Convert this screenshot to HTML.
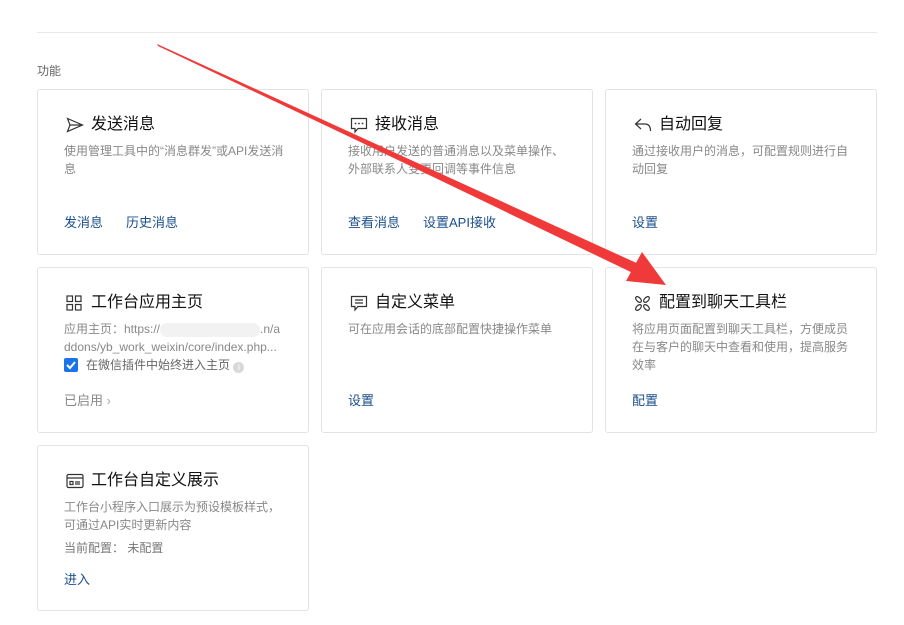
<!DOCTYPE html>
<html><head><meta charset="utf-8"><style>
*{margin:0;padding:0;box-sizing:border-box}
body{width:904px;height:625px;background:#fff;font-family:"Liberation Sans","Noto Sans CJK SC",sans-serif;position:relative;overflow:hidden}
.hr{position:absolute;left:37px;top:32px;width:840px;height:1px;background:#e8e8e8}
.lbl{position:absolute;left:37px;top:62px;font-size:12px;color:#666}
.card{position:absolute;width:272px;height:166px;border:1px solid #e3e3e3;border-radius:3px}
.t{position:absolute;left:26px;top:25px;font-size:16px;color:#111;line-height:20px;white-space:nowrap}
.ic{position:absolute;left:28px;top:27px}
.d{position:absolute;left:26px;font-size:12px;color:#888;line-height:18px;width:225px}
.a{position:absolute;left:26px;font-size:13px;color:#1b4f8a;line-height:18px;white-space:nowrap}
.a span{margin-right:23px}
</style></head><body>
<div class="hr"></div>
<div class="lbl">功能</div>

<div class="card" style="left:37px;top:89px">
<svg class="ic" width="18" height="16" viewBox="0 0 18 16"><path d="M1.5 1.5 L16.5 8 L1.5 14.5 L4 8 Z M4 8 H16.5" fill="none" stroke="#333" stroke-width="1.2"/></svg>
<div class="t" style="left:53px">发送消息</div>
<div class="d" style="top:52px">使用管理工具中的“消息群发”或API发送消息</div>
<div class="a" style="top:124px"><span>发消息</span>历史消息</div>
</div>

<div class="card" style="left:321px;top:89px">
<svg class="ic" width="18" height="17" viewBox="0 0 18 17"><path d="M1.5 1.5 H16.5 V11.5 H8 L5 15 V11.5 H1.5 Z" fill="none" stroke="#333" stroke-width="1.2"/><circle cx="5.5" cy="6.5" r=".9" fill="#333"/><circle cx="9" cy="6.5" r=".9" fill="#333"/><circle cx="12.5" cy="6.5" r=".9" fill="#333"/></svg>
<div class="t" style="left:53px">接收消息</div>
<div class="d" style="top:52px">接收用户发送的普通消息以及菜单操作、外部联系人变更回调等事件信息</div>
<div class="a" style="top:124px"><span>查看消息</span>设置API接收</div>
</div>

<div class="card" style="left:605px;top:89px">
<svg class="ic" width="18" height="16" viewBox="0 0 18 16"><path d="M7 2 L1.5 7 L7 12 M1.5 7 H11 Q16.5 7 16.5 14" fill="none" stroke="#333" stroke-width="1.2"/></svg>
<div class="t" style="left:53px">自动回复</div>
<div class="d" style="top:52px">通过接收用户的消息，可配置规则进行自动回复</div>
<div class="a" style="top:124px">设置</div>
</div>

<div class="card" style="left:37px;top:267px">
<svg class="ic" width="16" height="16" viewBox="0 0 16 16" fill="none" stroke="#333" stroke-width="1.2"><rect x="1" y="1" width="5.5" height="5.5"/><rect x="9.5" y="1" width="5.5" height="5.5"/><rect x="1" y="9.5" width="5.5" height="5.5"/><rect x="9.5" y="9.5" width="5.5" height="5.5"/></svg>
<div class="t" style="left:53px">工作台应用主页</div>
<div class="d" style="top:52px;width:230px;white-space:nowrap">应用主页：https://<span style="display:inline-block;width:100px;height:14px;background:#f2f2f2;vertical-align:middle;border-radius:7px"></span>.n/a<br>ddons/yb_work_weixin/core/index.php...</div>
<div style="position:absolute;left:26px;top:90px;width:14px;height:14px;background:#1a73e8;border-radius:2px"><svg width="14" height="14"><path d="M3 7 L6 10 L11 4" stroke="#fff" stroke-width="2" fill="none"/></svg></div>
<div class="d" style="left:48px;top:88px;color:#666">在微信插件中始终进入主页 <span style="display:inline-block;width:11px;height:11px;border-radius:50%;background:#d8d8d8;color:#fff;font-size:9px;line-height:11px;text-align:center;vertical-align:-1px">i</span></div>
<div class="a" style="top:124px;color:#888">已启用 <span style="color:#aaa;margin:0">›</span></div>
</div>

<div class="card" style="left:321px;top:267px">
<svg class="ic" width="18" height="17" viewBox="0 0 18 17" fill="none" stroke="#333" stroke-width="1.2"><path d="M1.5 1.5 H16.5 V11.5 H8 L5 15 V11.5 H1.5 Z M5 5 H13 M5 8 H13"/></svg>
<div class="t" style="left:53px">自定义菜单</div>
<div class="d" style="top:52px">可在应用会话的底部配置快捷操作菜单</div>
<div class="a" style="top:124px">设置</div>
</div>

<div class="card" style="left:605px;top:267px">
<svg class="ic" width="17" height="17" viewBox="0 0 17 17" fill="none" stroke="#333" stroke-width="1.2"><ellipse cx="4.5" cy="4.5" rx="3.5" ry="2" transform="rotate(45 4.5 4.5)"/><ellipse cx="12.5" cy="4.5" rx="3.5" ry="2" transform="rotate(-45 12.5 4.5)"/><ellipse cx="4.5" cy="12.5" rx="3.5" ry="2" transform="rotate(-45 4.5 12.5)"/><ellipse cx="12.5" cy="12.5" rx="3.5" ry="2" transform="rotate(45 12.5 12.5)"/></svg>
<div class="t" style="left:53px">配置到聊天工具栏</div>
<div class="d" style="top:52px">将应用页面配置到聊天工具栏，方便成员在与客户的聊天中查看和使用，提高服务效率</div>
<div class="a" style="top:124px">配置</div>
</div>

<div class="card" style="left:37px;top:445px">
<svg class="ic" width="18" height="16" viewBox="0 0 18 16" fill="none" stroke="#333" stroke-width="1.2"><rect x="1" y="1.5" width="16" height="13" rx="1.5"/><path d="M1 5 H17 M4 8.5 H7 V11.5 H4 Z M9 9 H14 M9 11 H14"/></svg>
<div class="t" style="left:53px">工作台自定义展示</div>
<div class="d" style="top:52px">工作台小程序入口展示为预设模板样式，可通过API实时更新内容</div>
<div class="d" style="top:93px;color:#777">当前配置： 未配置</div>
<div class="a" style="top:125px">进入</div>
</div>

<svg style="position:absolute;left:0;top:0" width="904" height="625">
<polygon points="157,44 158,46 643,276 646,270" fill="#f03a3a"/>
<polygon points="666,285 626,281 642,252" fill="#f03a3a"/>
<polygon points="157,44 643,266 639,276" fill="#f03a3a"/>
</svg>
</body></html>
